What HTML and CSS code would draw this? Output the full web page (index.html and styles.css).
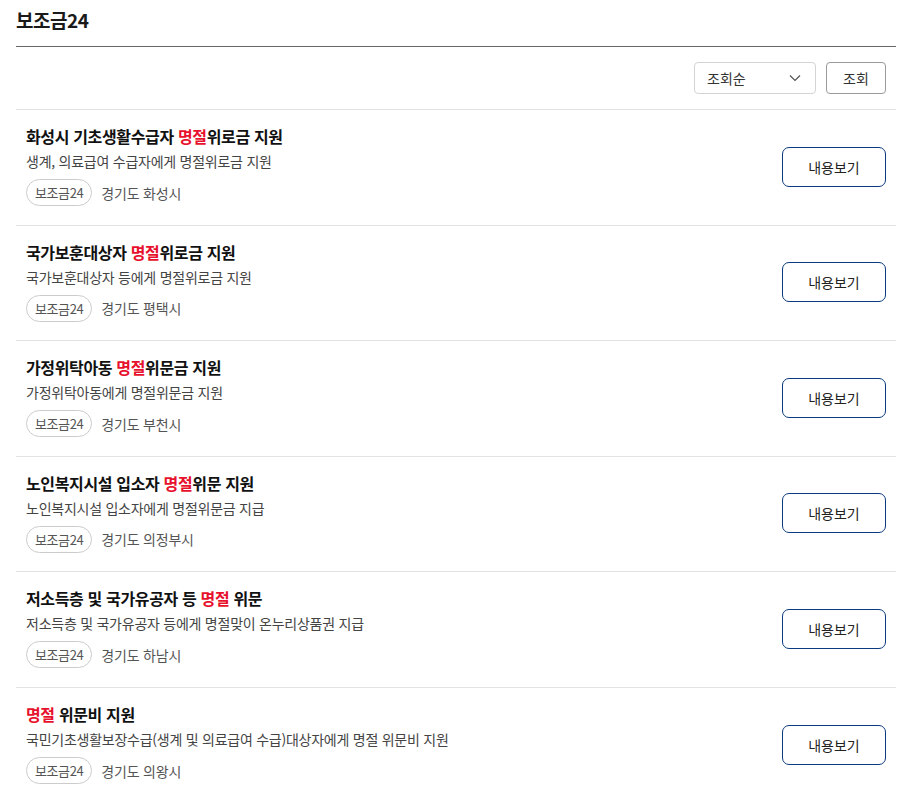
FILE: index.html
```html
<!DOCTYPE html>
<html lang="ko">
<head>
<meta charset="utf-8">
<link rel="stylesheet" href="styles.css">
</head>
<body>
<div class="page">
  <h2 class="page-title">보조금24</h2>
  <div class="toolbar">
    <div class="select">
      <span>조회순</span>
      <svg class="chev" width="12" height="8" viewBox="0 0 12 8"><path d="M1 1.5 L6 6.5 L11 1.5" fill="none" stroke="#555" stroke-width="1.2"/></svg>
    </div>
    <button class="btn-search">조회</button>
  </div>
  <ul class="list">
    <li class="item">
      <div class="info">
        <div class="title">화성시 기초생활수급자 <em>명절</em>위로금 지원</div>
        <div class="desc">생계, 의료급여 수급자에게 명절위로금 지원</div>
        <div class="meta"><span class="tag">보조금24</span><span class="loc">경기도 화성시</span></div>
      </div>
      <button class="btn-view">내용보기</button>
    </li>
    <li class="item">
      <div class="info">
        <div class="title">국가보훈대상자 <em>명절</em>위로금 지원</div>
        <div class="desc">국가보훈대상자 등에게 명절위로금 지원</div>
        <div class="meta"><span class="tag">보조금24</span><span class="loc">경기도 평택시</span></div>
      </div>
      <button class="btn-view">내용보기</button>
    </li>
    <li class="item">
      <div class="info">
        <div class="title">가정위탁아동 <em>명절</em>위문금 지원</div>
        <div class="desc">가정위탁아동에게 명절위문금 지원</div>
        <div class="meta"><span class="tag">보조금24</span><span class="loc">경기도 부천시</span></div>
      </div>
      <button class="btn-view">내용보기</button>
    </li>
    <li class="item">
      <div class="info">
        <div class="title">노인복지시설 입소자 <em>명절</em>위문 지원</div>
        <div class="desc">노인복지시설 입소자에게 명절위문금 지급</div>
        <div class="meta"><span class="tag">보조금24</span><span class="loc">경기도 의정부시</span></div>
      </div>
      <button class="btn-view">내용보기</button>
    </li>
    <li class="item">
      <div class="info">
        <div class="title">저소득층 및 국가유공자 등 <em>명절</em> 위문</div>
        <div class="desc">저소득층 및 국가유공자 등에게 명절맞이 온누리상품권 지급</div>
        <div class="meta"><span class="tag">보조금24</span><span class="loc">경기도 하남시</span></div>
      </div>
      <button class="btn-view">내용보기</button>
    </li>
    <li class="item">
      <div class="info">
        <div class="title"><em>명절</em> 위문비 지원</div>
        <div class="desc">국민기초생활보장수급(생계 및 의료급여 수급)대상자에게 명절 위문비 지원</div>
        <div class="meta"><span class="tag">보조금24</span><span class="loc">경기도 의왕시</span></div>
      </div>
      <button class="btn-view">내용보기</button>
    </li>
  </ul>
</div>
</body>
</html>
```

FILE: styles.css
```css
* { box-sizing: border-box; }
html, body { margin: 0; padding: 0; background: #fff; }
body {
  font-family: "Noto Sans CJK KR", "Noto Sans", sans-serif;
  color: #111;
}
.page { padding: 0 18px 0 16px; }
.page-title {
  margin: 0;
  padding-top: 6px;
  height: 47px;
  font-size: 19px;
  font-weight: 700;
  line-height: 28px;
  letter-spacing: -0.5px;
  color: #1a1a1a;
  border-bottom: 1px solid #666;
}
.toolbar {
  display: flex;
  justify-content: flex-end;
  gap: 10px;
  padding: 15px 10px 15px 0;
  border-bottom: 1px solid #e2e2e2;
}
.select {
  width: 122px;
  height: 32px;
  border: 1px solid #d4d4d4;
  border-radius: 4px;
  display: flex;
  align-items: center;
  justify-content: space-between;
  padding: 0 14px 0 12px;
  font-size: 14px;
  color: #333;
}
.btn-search {
  width: 60px;
  height: 32px;
  border: 1px solid #9a9a9a;
  border-radius: 4px;
  background: #fff;
  font-family: inherit;
  font-size: 14px;
  color: #333;
  padding: 0;
}
.list { list-style: none; margin: 0; padding: 0; }
.item {
  display: flex;
  align-items: center;
  justify-content: space-between;
  padding: 13px 10px 17px 10px;
  border-bottom: 1px solid #e2e2e2;
  height: 115.5px;
}
.item:last-child { border-bottom: none; }
.title {
  font-size: 16px;
  font-weight: 700;
  line-height: 24px;
  letter-spacing: -0.35px;
  color: #111;
}
.title em { font-style: normal; color: #e8112d; }
.desc {
  margin-top: 2px;
  font-size: 14px;
  line-height: 22px;
  color: #444;
  letter-spacing: -0.25px;
}
.meta {
  margin-top: 7px;
  display: flex;
  align-items: center;
  gap: 9px;
}
.tag {
  display: inline-flex;
  align-items: center;
  height: 27px;
  padding: 0 8px;
  border: 1px solid #ccc;
  border-radius: 14px;
  font-size: 13px;
  letter-spacing: -0.4px;
  color: #555;
}
.loc { font-size: 14px; color: #555; letter-spacing: -0.2px; }
.btn-view {
  width: 104px;
  height: 40px;
  border: 1px solid #0b3a7e;
  border-radius: 7px;
  background: #fff;
  font-family: inherit;
  font-size: 14px;
  color: #222;
  padding: 0;
  margin-top: 3px;
}
```
